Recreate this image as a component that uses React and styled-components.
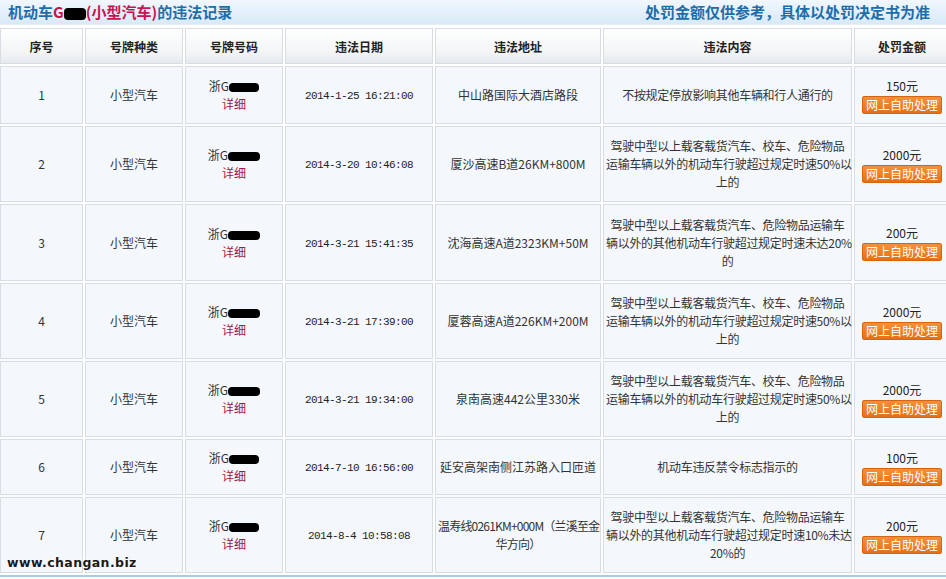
import React from 'react'
import styled, { createGlobalStyle } from 'styled-components'

const rows = [
  {
    no: 1, plateMask: 30, date: '2014-1-25 16:21:00', place: ['中山路国际大酒店路段'],
    act: ['不按规定停放影响其他车辆和行人通行的'], fee: '150元', h: 56,
  },
  {
    no: 2, plateMask: 32, date: '2014-3-20 10:46:08', place: ['厦沙高速B道26KM+800M'],
    act: ['驾驶中型以上载客载货汽车、校车、危险物品', '运输车辆以外的机动车行驶超过规定时速50%以', '上的'], fee: '2000元', h: 74,
  },
  {
    no: 3, plateMask: 32, date: '2014-3-21 15:41:35', place: ['沈海高速A道2323KM+50M'],
    act: ['驾驶中型以上载客载货汽车、危险物品运输车', '辆以外的其他机动车行驶超过规定时速未达20%', '的'], fee: '200元', h: 75,
  },
  {
    no: 4, plateMask: 32, date: '2014-3-21 17:39:00', place: ['厦蓉高速A道226KM+200M'],
    act: ['驾驶中型以上载客载货汽车、校车、危险物品', '运输车辆以外的机动车行驶超过规定时速50%以', '上的'], fee: '2000元', h: 74,
  },
  {
    no: 5, plateMask: 32, date: '2014-3-21 19:34:00', place: ['泉南高速442公里330米'],
    act: ['驾驶中型以上载客载货汽车、校车、危险物品', '运输车辆以外的机动车行驶超过规定时速50%以', '上的'], fee: '2000元', h: 74,
  },
  {
    no: 6, plateMask: 30, date: '2014-7-10 16:56:00', place: ['延安高架南侧江苏路入口匝道'],
    act: ['机动车违反禁令标志指示的'], fee: '100元', h: 54,
  },
  {
    no: 7, plateMask: 30, date: '2014-8-4 10:58:08', place: ['温寿线0261KM+000M（兰溪至金', '华方向）'],
    act: ['驾驶中型以上载客载货汽车、危险物品运输车', '辆以外的其他机动车行驶超过规定时速10%未达', '20%的'], fee: '200元', h: 74,
  },
]

const heads = ['序号', '号牌种类', '号牌号码', '违法日期', '违法地址', '违法内容', '处罚金额']
const widths = [83, 98, 98, 148, 166, 249, 96]

const Global = createGlobalStyle`
  body {
    margin: 0;
    background: #fff;
    font-family: "Noto Sans CJK SC", "Liberation Sans", sans-serif;
    font-size: 12px;
    color: #333;
  }
`

const Page = styled.div`
  position: relative;
  width: 946px;
  height: 579px;
  overflow: hidden;
  background: #fff;
`

const TitleBar = styled.div`
  display: flex;
  justify-content: space-between;
  align-items: center;
  height: 24px;
  padding: 0 16px 0 8px;
  background: linear-gradient(#f1f7fd, #d8e9f8);
  border-bottom: 1px solid #e3eef8;
  font-size: 15px;
  font-weight: bold;
  color: #1d6dab;
  line-height: 24px;
`

const Red = styled.span`
  color: #c4154c;
`

const Mask = styled.span`
  display: inline-block;
  width: ${({ w }) => w}px;
  height: ${({ h }) => h || 10}px;
  background: #000;
  border-radius: 4px;
  vertical-align: middle;
`

const TableWrap = styled.div`
  margin-top: 1px;
  overflow: hidden;
  border-bottom: 2px solid #a8cbe6;
`

const Table = styled.table`
  border-collapse: separate;
  border-spacing: 2px;
  margin: 0 -2px;
  table-layout: fixed;
  width: 952px;
`

const Head = styled.th`
  height: 34px;
  padding: 0;
  border: 1px solid #d7dde4;
  background: linear-gradient(#ffffff, #f2f4f6 70%, #e6e9ec);
  font-weight: bold;
  font-size: 12px;
  color: #222;
  text-align: center;
`

const Cell = styled.td`
  height: ${({ h }) => h}px;
  padding: 0 2px;
  border: 1px solid #d7dde4;
  background: #f4f8fc;
  text-align: center;
  vertical-align: middle;
  line-height: 18px;
  color: #333;
  letter-spacing: ${({ squeeze }) => squeeze || 0}px;
`

const Line = styled.div`
  white-space: nowrap;
`

const DateText = styled.span`
  font-family: "Liberation Mono", monospace;
  font-size: 11px;
  letter-spacing: -0.6px;
  color: #222;
`

const Detail = styled.div`
  color: #a1183f;
`

const Fee = styled.div`
  color: #222;
`

const Btn = styled.button`
  display: block;
  margin: 1px auto 0;
  width: 80px;
  height: 18px;
  padding: 0;
  border: 1px solid #d5650c;
  border-radius: 2px;
  background: linear-gradient(#f69038, #e86f12);
  color: #fff;
  font-family: "Noto Sans CJK SC", sans-serif;
  font-size: 12px;
  line-height: 16px;
  cursor: pointer;
`

const Watermark = styled.div`
  position: absolute;
  left: 7px;
  top: 555px;
  font-family: "DejaVu Sans", sans-serif;
  font-weight: bold;
  font-size: 12.5px;
  letter-spacing: 0.4px;
  color: #1a1a1a;
  text-shadow: 0 0 2px #fff, 0 0 2px #fff;
`

export default function App() {
  return (
    <Page>
      <Global />
      <TitleBar>
        <span>
          机动车<Red>G</Red><Mask w={22} h={12} />
          <Red>(小型汽车)</Red>的违法记录
        </span>
        <span>处罚金额仅供参考，具体以处罚决定书为准</span>
      </TitleBar>
      <TableWrap>
        <Table>
          <colgroup>
            {widths.map((w, i) => (
              <col key={i} style={{ width: w }} />
            ))}
          </colgroup>
          <thead>
            <tr>
              {heads.map((h) => (
                <Head key={h}>{h}</Head>
              ))}
            </tr>
          </thead>
          <tbody>
            {rows.map((r) => (
              <tr key={r.no}>
                <Cell h={r.h}>{r.no}</Cell>
                <Cell h={r.h}>小型汽车</Cell>
                <Cell h={r.h}>
                  <div>
                    浙G<Mask w={r.plateMask} h={9} />
                  </div>
                  <Detail>详细</Detail>
                </Cell>
                <Cell h={r.h}>
                  <DateText>{r.date}</DateText>
                </Cell>
                <Cell h={r.h} squeeze={r.place.length > 1 ? -0.8 : 0}>
                  {r.place.map((p) => (
                    <Line key={p}>{p}</Line>
                  ))}
                </Cell>
                <Cell h={r.h} squeeze={-0.3}>
                  {r.act.map((a) => (
                    <Line key={a}>{a}</Line>
                  ))}
                </Cell>
                <Cell h={r.h}>
                  <Fee>{r.fee}</Fee>
                  <Btn>网上自助处理</Btn>
                </Cell>
              </tr>
            ))}
          </tbody>
        </Table>
      </TableWrap>
      <Watermark>www.changan.biz</Watermark>
    </Page>
  )
}
